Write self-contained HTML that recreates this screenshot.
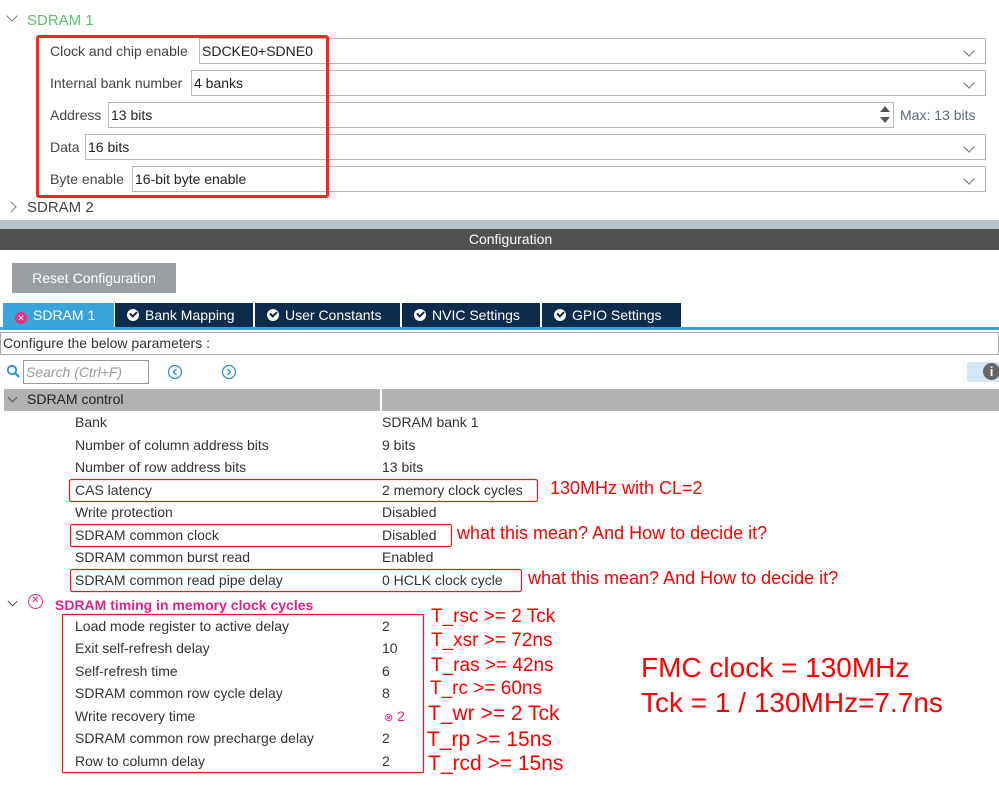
<!DOCTYPE html>
<html><head><meta charset="utf-8"><style>
*{margin:0;padding:0;box-sizing:border-box}
body{width:999px;height:787px;background:#fff;position:relative;overflow:hidden;font-family:"Liberation Sans",Arial,sans-serif;font-size:14px;color:#333}
.a{position:absolute;white-space:nowrap}
.fld{position:absolute;height:26px;border:1px solid #b8b8b8;background:#fff;padding:3px 2px;font-size:14px;color:#222;line-height:18px}
.chev{position:absolute;right:12px;top:8px;width:8px;height:8px;border-right:1.3px solid #666;border-bottom:1.3px solid #666;transform:rotate(45deg)}
.lbl{position:absolute;left:50px;color:#444;font-size:14px}
.red{position:absolute;color:#f00;white-space:nowrap}
.tab{position:absolute;top:303px;height:25px;background:#0c2b4d;color:#fff;font-size:14px;line-height:25px;padding-left:12px}
.ck{display:inline-block;width:12px;height:12px;border-radius:50%;background:#fff;vertical-align:-1px;margin-right:6px;position:relative}
.ck:after{content:"";position:absolute;left:3px;top:2px;width:5px;height:3px;border-left:2px solid #0c2b4d;border-bottom:2px solid #0c2b4d;transform:rotate(-45deg)}
.row{position:absolute;font-size:14px;color:#333}
</style></head><body>
<div class="a" style="left:8px;top:12px;width:8px;height:8px;border-right:1.3px solid #777;border-bottom:1.3px solid #777;transform:rotate(45deg)"></div>
<div class="a" style="left:27px;top:12px;color:#5cbf6a;font-size:15px">SDRAM 1</div>

<div class="lbl" style="top:43px">Clock and chip enable</div>
<div class="fld" style="left:199px;top:38px;width:787px">SDCKE0+SDNE0<div class="chev"></div></div>
<div class="lbl" style="top:75px">Internal bank number</div>
<div class="fld" style="left:191px;top:70px;width:795px">4 banks<div class="chev"></div></div>
<div class="lbl" style="top:107px">Address</div>
<div class="fld" style="left:108px;top:102px;width:786px">13 bits
<div class="a" style="right:3px;top:3px;width:0;height:0;border-left:5px solid transparent;border-right:5px solid transparent;border-bottom:6px solid #555"></div>
<div class="a" style="right:3px;top:14px;width:0;height:0;border-left:5px solid transparent;border-right:5px solid transparent;border-top:6px solid #555"></div></div>
<div class="a" style="left:900px;top:107px;color:#5a6a7a">Max: 13 bits</div>
<div class="lbl" style="top:139px">Data</div>
<div class="fld" style="left:85px;top:134px;width:901px">16 bits<div class="chev"></div></div>
<div class="lbl" style="top:171px">Byte enable</div>
<div class="fld" style="left:132px;top:166px;width:854px">16-bit byte enable<div class="chev"></div></div>
<div class="a" style="left:36px;top:35px;width:293px;height:163px;border:3px solid #f22;border-radius:3px"></div>

<div class="a" style="left:7px;top:203px;width:8px;height:8px;border-right:1.3px solid #777;border-bottom:1.3px solid #777;transform:rotate(-45deg)"></div>
<div class="a" style="left:27px;top:199px;color:#444;font-size:15px">SDRAM 2</div>

<div class="a" style="left:0;top:220px;width:999px;height:9px;background:#b8c4c9"></div>
<div class="a" style="left:0;top:229px;width:999px;height:21px;background:#505150;color:#fff;text-align:center;line-height:21px;font-size:14px;padding-left:22px">Configuration</div>

<div class="a" style="left:12px;top:263px;width:164px;height:30px;background:#9b9ea0;color:#fff;line-height:30px;text-align:center;font-size:14px">Reset Configuration</div>

<div class="tab" style="left:3px;width:111px;background:#3ba3db"><span style="display:inline-block;width:12px;height:12px;border-radius:50%;background:#e8307f;color:#fff;font-size:9px;line-height:12px;text-align:center;margin-right:6px;vertical-align:-1px">✕</span>SDRAM 1</div>
<div class="tab" style="left:115px;width:138px"><span class="ck"></span>Bank Mapping</div>
<div class="tab" style="left:255px;width:145px"><span class="ck"></span>User Constants</div>
<div class="tab" style="left:402px;width:138px"><span class="ck"></span>NVIC Settings</div>
<div class="tab" style="left:542px;width:139px"><span class="ck"></span>GPIO Settings</div>
<div class="a" style="left:0;top:327px;width:999px;height:3px;background:#3ba3db"></div>
<div class="a" style="left:0;top:332px;width:999px;height:23px;border:1px solid #aaa;line-height:21px;padding-left:2px;color:#333">Configure the below parameters :</div>

<svg class="a" style="left:6px;top:364px" width="16" height="16"><circle cx="6" cy="6" r="4.2" fill="none" stroke="#2a8fd0" stroke-width="1.8"/><line x1="9" y1="9" x2="13" y2="13" stroke="#2a8fd0" stroke-width="2"/></svg>
<div class="a" style="left:23px;top:360px;width:126px;height:24px;border:1px solid #999;color:#999;font-style:italic;line-height:22px;padding-left:2px">Search (Ctrl+F)</div>
<svg class="a" style="left:167px;top:364px" width="16" height="16"><circle cx="8" cy="8" r="6.5" fill="none" stroke="#2a8fd0" stroke-width="1.3"/><path d="M9.5 5 L6.5 8 L9.5 11" fill="none" stroke="#2a8fd0" stroke-width="1.4"/></svg>
<svg class="a" style="left:221px;top:364px" width="16" height="16"><circle cx="8" cy="8" r="6.5" fill="none" stroke="#2a8fd0" stroke-width="1.3"/><path d="M6.5 5 L9.5 8 L6.5 11" fill="none" stroke="#2a8fd0" stroke-width="1.4"/></svg>
<div class="a" style="left:967px;top:362px;width:32px;height:20px;background:#d5e6f4"></div>
<div class="a" style="left:983px;top:363px;width:17px;height:17px;border-radius:50%;background:#666;color:#fff;font-weight:bold;font-size:13px;text-align:center;line-height:17px">i</div>

<div class="a" style="left:4px;top:389px;width:995px;height:22px;background:#b2b2b2"></div>
<div class="a" style="left:380px;top:389px;width:2px;height:22px;background:#fff"></div>
<div class="a" style="left:9px;top:394px;width:7px;height:7px;border-right:1px solid #555;border-bottom:1px solid #555;transform:rotate(45deg)"></div>
<div class="a" style="left:27px;top:391px;color:#222;font-size:14px">SDRAM control</div>

<div class="row" style="left:75px;top:414px">Bank</div><div class="row" style="left:382px;top:414px">SDRAM bank 1</div>
<div class="row" style="left:75px;top:437px">Number of column address bits</div><div class="row" style="left:382px;top:437px">9 bits</div>
<div class="row" style="left:75px;top:459px">Number of row address bits</div><div class="row" style="left:382px;top:459px">13 bits</div>
<div class="row" style="left:75px;top:482px">CAS latency</div><div class="row" style="left:382px;top:482px">2 memory clock cycles</div>
<div class="row" style="left:75px;top:504px">Write protection</div><div class="row" style="left:382px;top:504px">Disabled</div>
<div class="row" style="left:75px;top:527px">SDRAM common clock</div><div class="row" style="left:382px;top:527px">Disabled</div>
<div class="row" style="left:75px;top:549px">SDRAM common burst read</div><div class="row" style="left:382px;top:549px">Enabled</div>
<div class="row" style="left:75px;top:572px">SDRAM common read pipe delay</div><div class="row" style="left:382px;top:572px">0 HCLK clock cycle</div>

<svg class="a" style="left:0;top:0" width="999" height="787">
<g fill="none" stroke="#f01818" stroke-width="1.2">
<rect x="69.5" y="479.5" width="468" height="22" rx="2"/>
<rect x="70.5" y="524.5" width="381" height="22" rx="2"/>
<rect x="70.5" y="569.5" width="451" height="22" rx="2"/>
<rect x="62.5" y="614.5" width="361" height="158" rx="1"/>
</g></svg>

<div class="red" style="left:550px;top:478px;font-size:18px">130MHz with CL=2</div>
<div class="red" style="left:457px;top:523px;font-size:18px">what this mean? And How to decide it?</div>
<div class="red" style="left:528px;top:568px;font-size:18px">what this mean? And How to decide it?</div>

<div class="a" style="left:9px;top:598px;width:7px;height:7px;border-right:1px solid #555;border-bottom:1px solid #555;transform:rotate(45deg)"></div>
<div class="a" style="left:28px;top:594px;width:15px;height:15px;border:1.5px solid #e0218a;border-radius:50%;color:#e0218a;font-size:10px;line-height:12px;text-align:center">✕</div>
<div class="a" style="left:55px;top:597px;color:#e0218a;font-weight:bold;font-size:14px">SDRAM timing in memory clock cycles</div>

<div class="row" style="left:75px;top:618px">Load mode register to active delay</div><div class="row" style="left:382px;top:618px">2</div>
<div class="row" style="left:75px;top:640px">Exit self-refresh delay</div><div class="row" style="left:382px;top:640px">10</div>
<div class="row" style="left:75px;top:663px">Self-refresh time</div><div class="row" style="left:382px;top:663px">6</div>
<div class="row" style="left:75px;top:685px">SDRAM common row cycle delay</div><div class="row" style="left:382px;top:685px">8</div>
<div class="row" style="left:75px;top:708px">Write recovery time</div><div class="row" style="left:384px;top:708px;color:#e0218a"><span style="font-size:11px">⊗</span> 2</div>
<div class="row" style="left:75px;top:730px">SDRAM common row precharge delay</div><div class="row" style="left:382px;top:730px">2</div>
<div class="row" style="left:75px;top:753px">Row to column delay</div><div class="row" style="left:382px;top:753px">2</div>

<div class="red" style="left:431px;top:606px;font-size:19px">T_rsc &gt;= 2 Tck</div>
<div class="red" style="left:431px;top:630px;font-size:19px">T_xsr &gt;= 72ns</div>
<div class="red" style="left:431px;top:655px;font-size:19px">T_ras &gt;= 42ns</div>
<div class="red" style="left:430px;top:678px;font-size:19px">T_rc &gt;= 60ns</div>
<div class="red" style="left:428px;top:702px;font-size:21px">T_wr &gt;= 2 Tck</div>
<div class="red" style="left:427px;top:728px;font-size:21px">T_rp &gt;= 15ns</div>
<div class="red" style="left:428px;top:752px;font-size:21px">T_rcd &gt;= 15ns</div>
<div class="red" style="left:641px;top:652px;font-size:28px">FMC clock = 130MHz</div>
<div class="red" style="left:641px;top:687px;font-size:28px">Tck = 1 / 130MHz=7.7ns</div>
</body></html>
